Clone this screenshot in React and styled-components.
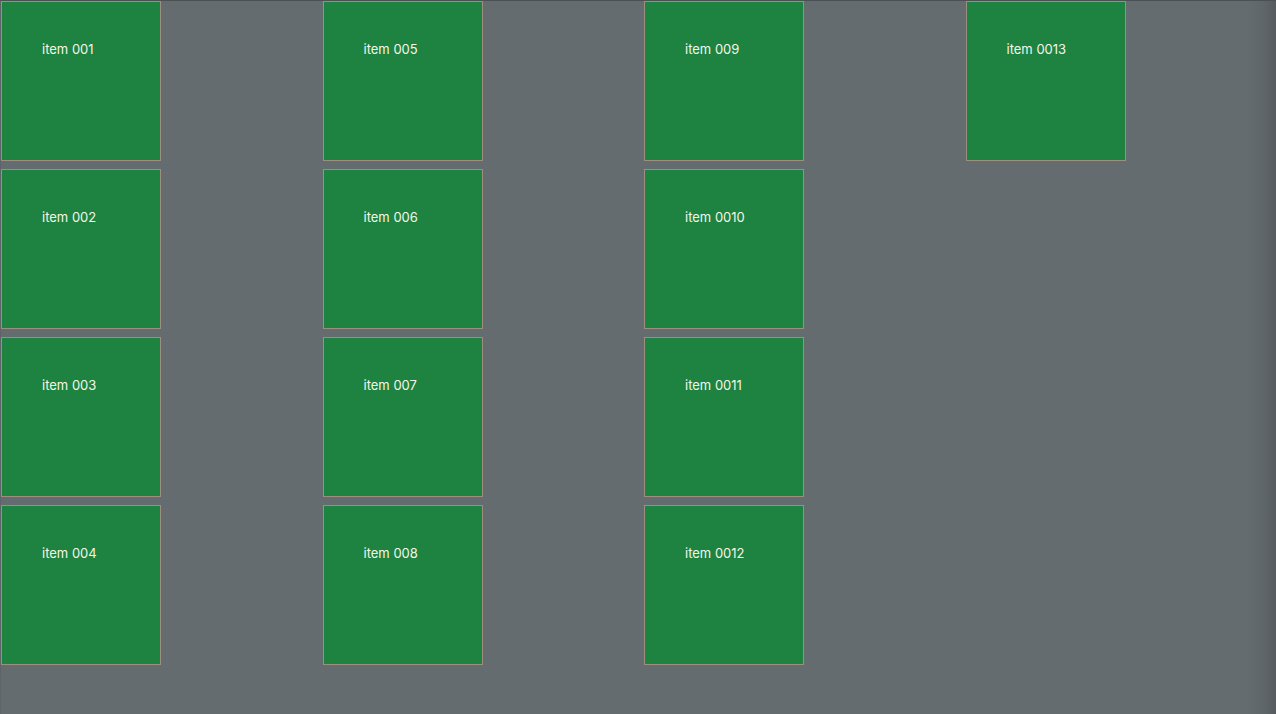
import React from 'react';
import styled, { createGlobalStyle } from 'styled-components';

const GlobalStyle = createGlobalStyle`
  html, body {
    margin: 0;
    padding: 0;
    background: #656c70;
  }
  * {
    box-sizing: border-box;
  }
`;

const Page = styled.div`
  width: 1276px;
  height: 714px;
  overflow: hidden;
  border-top: 1px solid #4b5053;
  border-left: 1px solid #5e6468;
  background: linear-gradient(
    to right,
    #656c70 0,
    #656c70 calc(100% - 30px),
    #5f666a calc(100% - 12px),
    #555b5f 100%
  );
  font-family: Inter, Roboto, 'Liberation Sans', sans-serif;
`;

const Grid = styled.div`
  display: grid;
  grid-auto-flow: column;
  grid-template-rows: repeat(4, 160px);
  grid-auto-columns: 160px;
  row-gap: 8px;
  column-gap: 161.5px;
`;

const Tile = styled.div`
  width: 160px;
  height: 160px;
  background: #1e8340;
  border: 1px solid #9c8f80;
  padding: 40px 40px;
  color: #f4f6ea;
  font-size: 13px;
  line-height: 15px;
`;

const items = Array.from({ length: 13 }, (_, i) => `item 00${i + 1}`);

export default function App() {
  return (
    <>
      <GlobalStyle />
      <Page>
        <Grid>
          {items.map((label) => (
            <Tile key={label}>{label}</Tile>
          ))}
        </Grid>
      </Page>
    </>
  );
}
